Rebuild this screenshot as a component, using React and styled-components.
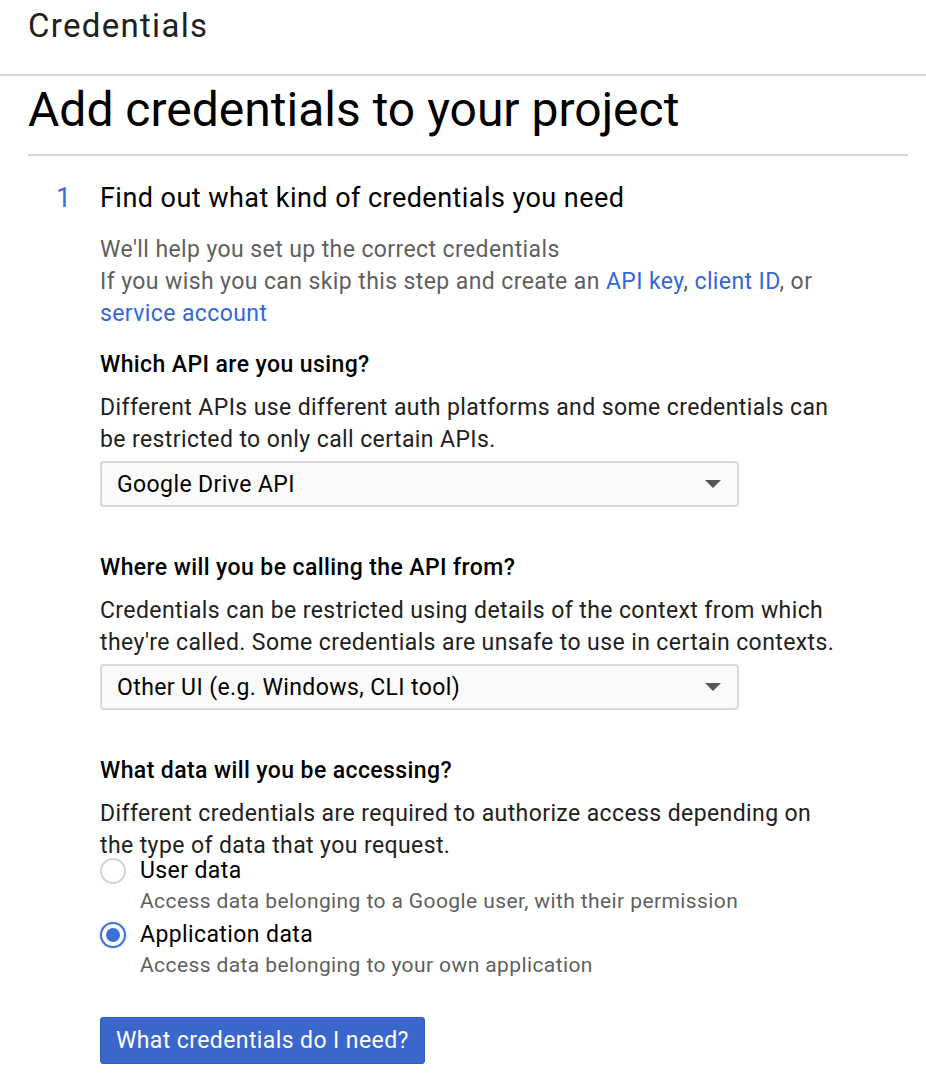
import React from "react"
import styled, { createGlobalStyle } from "styled-components"

const GlobalStyle = createGlobalStyle`
  body {
    margin: 0;
    background: #fff;
    font-family: Roboto, "Liberation Sans", Arial, sans-serif;
    color: #212121;
  }
`

const Page = styled.div`
  width: 926px;
  overflow: hidden;
`

const TopBar = styled.header`
  height: 74px;
  padding-left: 28px;
  border-bottom: 2px solid #d6d6d6;
  display: flex;
  align-items: flex-start;
`

const TopTitle = styled.div`
  font-size: 33px;
  letter-spacing: 1.3px;
  line-height: 52px;
  color: #212121;
`

const Content = styled.main`
  margin: 0 18px 0 28px;
`

const Heading = styled.h1`
  margin: 0;
  padding: 6px 0 16px;
  font-size: 48px;
  font-weight: 400;
  line-height: 56px;
  color: #000;
  border-bottom: 2px solid #d6d6d6;
`

const Step = styled.section`
  display: grid;
  grid-template-columns: 72px 1fr;
  padding-top: 24px;
`

const StepNumber = styled.div`
  font-size: 27px;
  line-height: 36px;
  color: #3b6fd6;
  padding-left: 28px;
`

const StepBody = styled.div`
  display: flex;
  flex-direction: column;
  max-width: 745px;
`

const StepTitle = styled.h2`
  margin: 0 0 18px;
  font-size: 27px;
  letter-spacing: 0.45px;
  font-weight: 400;
  line-height: 36px;
  color: #000;
`

const Text = styled.p`
  margin: 0;
  font-size: 23px;
  letter-spacing: 0.4px;
  line-height: 32px;
  color: ${p => (p.muted ? "#5f5f5f" : "#212121")};
`

const Link = styled.a`
  color: #3367d6;
  text-decoration: none;
`

const Question = styled.h3`
  margin: ${p => p.top}px 0 12px;
  font-size: 23px;
  letter-spacing: 0.4px;
  font-weight: 500;
  line-height: 30px;
  color: #000;
`

const Select = styled.div`
  margin-top: 5px;
  width: 639px;
  height: 46px;
  box-sizing: border-box;
  border: 2px solid #d9d9d9;
  border-radius: 4px;
  background: #fafafa;
  display: flex;
  align-items: center;
  justify-content: space-between;
  padding: 0 16px 0 15px;
  font-size: 23px;
  letter-spacing: 0.4px;
  color: #000;
`

const Arrow = styled.span`
  width: 0;
  height: 0;
  border-left: 8px solid transparent;
  border-right: 8px solid transparent;
  border-top: 8px solid #555;
`

const RadioGroup = styled.div`
  margin-top: -6px;
  display: flex;
  flex-direction: column;
`

const RadioRow = styled.label`
  display: grid;
  grid-template-columns: 40px 1fr;
  align-items: center;
`

const RadioCircle = styled.span`
  width: 26px;
  height: 26px;
  box-sizing: border-box;
  border-radius: 50%;
  border: 2px solid ${p => (p.checked ? "#3b6fd6" : "#d4d4d4")};
  display: flex;
  align-items: center;
  justify-content: center;
  box-shadow: ${p => (p.checked ? "0 0 3px rgba(59,111,214,0.35)" : "none")};
  &::after {
    content: "";
    width: 14px;
    height: 14px;
    border-radius: 50%;
    background: ${p => (p.checked ? "#3b6fd6" : "transparent")};
  }
`

const RadioLabel = styled.span`
  font-size: 23px;
  letter-spacing: 0.4px;
  line-height: 30px;
  color: #000;
`

const RadioHint = styled.div`
  margin: 0 0 4px 40px;
  font-size: 21px;
  letter-spacing: 0.4px;
  line-height: 30px;
  color: #5f5f5f;
`

const Button = styled.button`
  margin-top: 33px;
  align-self: flex-start;
  height: 47px;
  padding: 0 15px;
  border: 1px solid #2f5fc4;
  border-radius: 3px;
  background: #3b67cc;
  color: #fff;
  font-family: inherit;
  font-size: 23px;
  letter-spacing: 0.4px;
  cursor: pointer;
`

const Radio = ({ checked, label, hint }) => (
  <>
    <RadioRow>
      <RadioCircle checked={checked} />
      <RadioLabel>{label}</RadioLabel>
    </RadioRow>
    <RadioHint>{hint}</RadioHint>
  </>
)

export default function App() {
  return (
    <Page>
      <GlobalStyle />
      <TopBar>
        <TopTitle>Credentials</TopTitle>
      </TopBar>
      <Content>
        <Heading>Add credentials to your project</Heading>
        <Step>
          <StepNumber>1</StepNumber>
          <StepBody>
            <StepTitle>Find out what kind of credentials you need</StepTitle>
            <Text muted>We'll help you set up the correct credentials</Text>
            <Text muted>
              If you wish you can skip this step and create an <Link href="#">API key</Link>,{" "}
              <Link href="#">client ID</Link>, or <Link href="#">service account</Link>
            </Text>

            <Question top={20}>Which API are you using?</Question>
            <Text>
              Different APIs use different auth platforms and some credentials can be restricted to
              only call certain APIs.
            </Text>
            <Select>
              Google Drive API
              <Arrow />
            </Select>

            <Question top={46}>Where will you be calling the API from?</Question>
            <Text>
              Credentials can be restricted using details of the context from which they're called.
              Some credentials are unsafe to use in certain contexts.
            </Text>
            <Select>
              Other UI (e.g. Windows, CLI tool)
              <Arrow />
            </Select>

            <Question top={46}>What data will you be accessing?</Question>
            <Text>
              Different credentials are required to authorize access depending on the type of data
              that you request.
            </Text>
            <RadioGroup>
              <Radio
                label="User data"
                hint="Access data belonging to a Google user, with their permission"
              />
              <Radio
                checked
                label="Application data"
                hint="Access data belonging to your own application"
              />
            </RadioGroup>

            <Button>What credentials do I need?</Button>
          </StepBody>
        </Step>
      </Content>
    </Page>
  )
}
